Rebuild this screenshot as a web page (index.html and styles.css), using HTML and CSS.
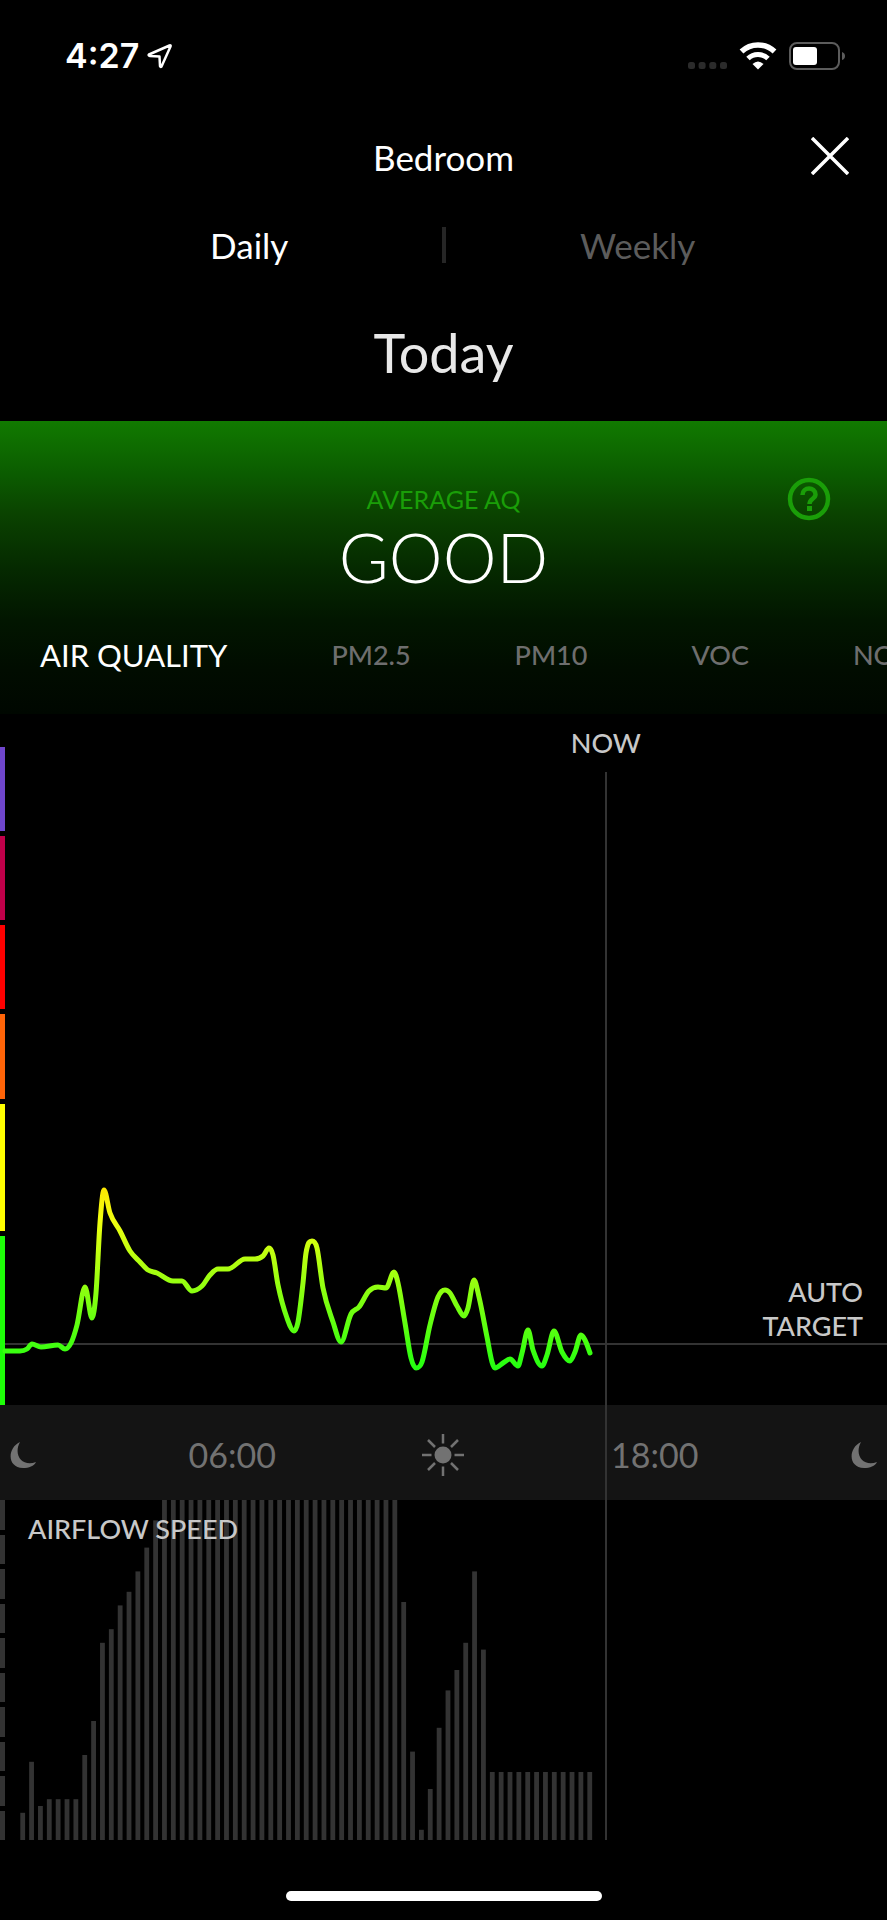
FILE: index.html
```
<!DOCTYPE html>
<html lang="en">
<head>
  <meta charset="UTF-8" />
  <meta name="viewport" content="width=device-width, initial-scale=1.0">
  <title>Bedroom - Air Quality</title>
  <link rel="stylesheet" href="styles.css">
</head>
<body>
  <div class="status-bar">
    <span class="clock">4:27</span>
    <svg class="location" width="26" height="26" viewBox="0 0 26 26">
      <path d="M2 11.5 L22.500 2.500 Q24 2 23.500 3.500 L14.500 23.500 Q13.500 24.500 13 23 L12.500 13.500 L3 13 Q1 12.500 2 11.500 Z" fill="none" stroke="#fff" stroke-width="2.500" stroke-linejoin="round" />
    </svg>
    <div class="status-icons">
      <svg width="39" height="8" viewBox="0 0 39 8" fill="#2b2b2b">
        <rect x="0" y="0" width="7" height="7" rx="2.500" />
        <rect x="10.600" y="0" width="7" height="7" rx="2.500" />
        <rect x="21.300" y="0" width="7" height="7" rx="2.500" />
        <rect x="32" y="0" width="7" height="7" rx="2.500" />
      </svg>
      <svg width="38" height="28" viewBox="0 0 38 28" fill="none" stroke="#fff">
        <path d="M2.500 9.500 A24 24 0 0 1 35.500 9.500" stroke-width="5.500" />
        <path d="M9 16.500 A14.500 14.500 0 0 1 29 16.500" stroke-width="5" />
        <path d="M13.500 22 Q19 17 24.500 22 L19 27.500 Z" fill="#fff" stroke="none" />
      </svg>
      <svg width="56" height="28" viewBox="0 0 56 28">
        <rect x="1" y="1" width="49" height="26" rx="7" fill="none" stroke="#5c5c5c" stroke-width="2" />
        <rect x="4" y="5" width="24" height="18" rx="3" fill="#fff" />
        <path d="M53 10 Q56 11 56 14 Q56 17 53 18 Z" fill="#5c5c5c" />
      </svg>
    </div>
  </div>

  <header class="header">
    <h1>Bedroom</h1>
    <button class="close-button" aria-label="Close">
      <svg width="38" height="38" viewBox="0 0 38 38" stroke="#fff" stroke-width="3.500">
        <path d="M1 1 L37 37 M37 1 L1 37" />
      </svg>
    </button>
  </header>

  <nav class="period-tabs">
    <button class="period active">Daily</button>
    <span class="divider"></span>
    <button class="period">Weekly</button>
  </nav>

  <h2>Today</h2>

  <section class="summary">
    <div class="average">
      <div class="average-label">AVERAGE AQ</div>
      <div class="average-value">GOOD</div>
      <button class="help-button" aria-label="Help">
        <svg width="44" height="44" viewBox="0 0 44 44" fill="none" stroke="#1a9e08" stroke-width="4.500">
          <circle cx="22" cy="22" r="19" />
          <path d="M15.500 18 C15.500 9.500 28.500 9.500 28.500 17.500 C28.500 22 22.500 21.500 22.500 27" />
          <path d="M20 31.500 H25" stroke-width="5" />
        </svg>
      </button>
    </div>
    <nav class="metrics">
      <button class="metric active">AIR QUALITY</button>
      <button class="metric">PM2.5</button>
      <button class="metric">PM10</button>
      <button class="metric">VOC</button>
      <button class="metric">NO2</button>
    </nav>
  </section>

  <main class="history">
    <div class="now">
      <span class="now-label">NOW</span>
      <span class="now-line"></span>
    </div>

    <div class="aq-chart">
      <div class="aq-scale">
        <span class="level severe"></span>
        <span class="level very-poor"></span>
        <span class="level poor"></span>
        <span class="level moderate"></span>
        <span class="level fair"></span>
        <span class="level good"></span>
      </div>
      <svg class="plot" viewBox="0 0 887 691" preserveAspectRatio="none">
        <defs>
          <linearGradient id="aq-gradient" gradientUnits="userSpaceOnUse" x1="0" y1="470" x2="0" y2="655">
            <stop offset="0" stop-color="#ffe600" />
            <stop offset="0.200" stop-color="#f0ff10" />
            <stop offset="0.400" stop-color="#b8ff10" />
            <stop offset="1" stop-color="#22ff10" />
          </linearGradient>
        </defs>
        <path class="target-line" d="M5 630 H887" />
        <path id="aq-line" class="aq-line" stroke="url(#aq-gradient)" />
      </svg>
      <div class="target-label">AUTO<br>TARGET</div>
    </div>

    <div class="time-axis">
      <svg class="moon" width="28" height="28" viewBox="0 0 28 28">
        <path d="M11 1 C-2 7 -2 27 14 27 C20 27 25 25 27 21 C13 26 4 14 11 1 Z" fill="#727272" />
      </svg>
      <span>06:00</span>
      <svg width="44" height="44" viewBox="0 0 44 44" stroke="#727272" stroke-width="2.500">
        <circle cx="22" cy="22" r="8.500" fill="#727272" stroke="none" />
        <path d="M22 1 V10.500 M22 33.500 V43 M1 22 H10.500 M33.500 22 H43 M7 7 L14 14 M30 30 L37 37 M37 7 L30 14 M14 30 L7 37" />
      </svg>
      <span>18:00</span>
      <svg class="moon last" width="28" height="28" viewBox="0 0 28 28">
        <path d="M11 1 C-2 7 -2 27 14 27 C20 27 25 25 27 21 C13 26 4 14 11 1 Z" fill="#727272" />
      </svg>
    </div>

    <div class="airflow-chart">
      <div class="airflow-scale">
        <span></span><span></span><span></span><span></span><span></span>
        <span></span><span></span><span></span><span></span><span></span>
      </div>
      <svg class="plot" viewBox="0 0 887 340" preserveAspectRatio="none">
        <g id="airflow-bars" fill="#333"></g>
      </svg>
      <div class="airflow-label">AIRFLOW SPEED</div>
    </div>
  </main>

  <div class="home-indicator"></div>

  <script src="script.js"></script>
</body>
</html>
```
FILE: styles.css
```
:root {
  --text: #ffffff;
  --text-soft: #c8c8c8;
  --text-muted: #6e6e6e;
  --line: #333333;
  --green: #1a9e08;
}

* {
  margin: 0;
  padding: 0;
  box-sizing: border-box;
}

body {
  font-family: 'Lato', sans-serif;
  background: #000;
  color: var(--text);
  min-height: 100vh;
  overflow-x: hidden;
}

button {
  font-family: inherit;
  color: inherit;
  background: none;
  border: none;
  cursor: pointer;
}

svg {
  display: block;
}

/* Status bar */
.status-bar {
  display: flex;
  align-items: center;
  gap: 8px;
  padding: 36px 42px 0 65px;
}

.clock {
  font-family: 'Inter', sans-serif;
  font-size: 34px;
  font-weight: 600;
  line-height: 40px;
}

.status-icons {
  display: flex;
  align-items: flex-end;
  gap: 12px;
  margin-left: auto;
}

/* Header */
.header {
  position: relative;
  padding-top: 57px;
  text-align: center;
}

h1 {
  font-size: 35px;
  font-weight: 400;
  line-height: 48px;
}

.close-button {
  position: absolute;
  right: 38px;
  bottom: 6px;
}

.period-tabs {
  display: flex;
  align-items: center;
  padding: 40px 57px 0;
}

.period {
  flex: 1;
  font-size: 35px;
  line-height: 48px;
  color: #5c5c5c;
}

.period.active {
  color: var(--text);
}

.divider {
  width: 4px;
  height: 36px;
  background: #262626;
}

h2 {
  padding: 48px 0 32px;
  font-size: 54px;
  font-weight: 400;
  line-height: 72px;
  text-align: center;
  color: #e8e8e8;
}

/* Average air quality */
.summary {
  height: 293px;
  padding-top: 60px;
  background: linear-gradient(#117a00 0%, #0b5c00 18%, #0a4200 32%, #052a00 50%, #021600 68%, #010c00 85%, #000700 100%);
}

.average {
  position: relative;
  text-align: center;
}

.average-label {
  font-size: 25px;
  line-height: 36px;
  color: var(--green);
}

.average-value {
  font-size: 68px;
  font-weight: 300;
  line-height: 80px;
}

.help-button {
  position: absolute;
  top: -4px;
  right: 56px;
}

.metrics {
  display: flex;
  align-items: center;
  gap: 104px;
  margin-top: 34px;
  padding-left: 40px;
  overflow: hidden;
}

.metric {
  flex: none;
  font-size: 27px;
  font-weight: 500;
  line-height: 48px;
  color: var(--text-muted);
}

.metric.active {
  font-size: 31px;
  font-weight: 400;
  color: var(--text);
}

/* History charts */
.history {
  position: relative;
}

.now {
  position: absolute;
  z-index: 1;
  top: 12px;
  bottom: 0;
  left: 68.3%;
  width: 100px;
  margin-left: -50px;
  display: flex;
  flex-direction: column;
  align-items: center;
  gap: 12px;
}

.now-label {
  font-size: 27px;
  font-weight: 500;
  line-height: 34px;
  color: var(--text-soft);
}

.now-line {
  flex: 1;
  width: 2px;
  background: var(--line);
}

.aq-chart {
  position: relative;
  height: 691px;
}

.aq-scale {
  display: flex;
  flex-direction: column;
  gap: 5px;
  width: 5px;
  height: 100%;
  padding-top: 33px;
}

.level {
  flex: 84;
}

.severe {
  background: #6f46cc;
}

.very-poor {
  background: #c0004a;
}

.poor {
  background: #ff0000;
}

.moderate {
  background: #ff6408;
}

.fair {
  flex: 127;
  background: #ffff00;
}

.good {
  flex: 169;
  background: #1eff08;
}

.plot {
  position: absolute;
  inset: 0;
  width: 100%;
  height: 100%;
}

.target-line {
  stroke: var(--line);
  stroke-width: 2;
}

.aq-line {
  fill: none;
  stroke-width: 5;
  stroke-linecap: round;
  stroke-linejoin: round;
}

.target-label {
  position: absolute;
  right: 24px;
  bottom: 62px;
  font-size: 27px;
  font-weight: 500;
  line-height: 34px;
  text-align: right;
  color: var(--text-soft);
}

.time-axis {
  display: grid;
  grid-template-columns: 3fr 5fr 5fr 5fr 3fr;
  align-items: center;
  justify-items: center;
  height: 95px;
  padding-top: 4px;
  background: #141414;
  font-size: 34px;
  font-weight: 400;
  color: #727272;
}

.moon {
  justify-self: start;
  margin-left: 9px;
}

.moon.last {
  justify-self: end;
  margin-right: 9px;
}

.airflow-chart {
  position: relative;
  height: 340px;
}

.airflow-scale {
  display: flex;
  flex-direction: column;
  gap: 5px;
  width: 5px;
  height: 100%;
}

.airflow-scale span {
  flex: 1;
  background: var(--line);
}

.airflow-label {
  position: absolute;
  top: 12px;
  left: 28px;
  font-size: 27px;
  font-weight: 500;
  line-height: 34px;
  color: var(--text-soft);
}

.home-indicator {
  width: 316px;
  height: 10px;
  margin: 51px auto 18px;
  border-radius: 5px;
  background: #fff;
}
```
FILE: script.js
```
// Air quality readings as [x, y] in chart units
const readings = [
  [5, 637], [20, 637], [27, 635], [32, 630], [41, 633], [58, 631], [65, 635],
  [71, 629], [77, 611], [85, 573], [92, 604], [96, 579], [100, 509], [104, 476],
  [110, 499], [120, 517], [130, 537], [140, 548], [148, 556], [157, 559],
  [173, 567], [182, 567], [192, 577], [202, 572], [210, 561], [218, 555],
  [228, 555], [245, 545], [255, 545], [263, 542], [269, 534], [273, 541],
  [278, 571], [287, 604], [294, 617], [298, 608], [303, 569], [306, 539],
  [312, 527], [317, 534], [323, 574], [333, 608], [341, 628], [351, 600],
  [359, 593], [369, 577], [378, 573], [386, 574], [394, 558], [398, 569],
  [405, 609], [411, 644], [416, 654], [422, 648], [430, 611], [438, 583],
  [445, 576], [450, 579], [457, 592], [464, 602], [468, 594], [474, 566],
  [479, 583], [487, 623], [492, 648], [495, 654], [503, 649], [510, 645],
  [518, 652], [522, 639], [528, 616], [533, 636], [542, 652], [547, 641],
  [554, 617], [562, 638], [570, 647], [575, 638], [581, 621], [585, 626],
  [590, 639]
];

// Fan speed in percent, one value per bar
const airflow = [
  8, 23, 10, 12, 12, 12, 12, 25, 35, 58, 62, 69, 73, 79, 86, 94,
  ...Array(27).fill(100),
  70, 26, 3, 15, 33, 44, 50, 58, 79, 56,
  ...Array(12).fill(20)
];

// Slope at each point, flat on peaks and dips so the curve never overshoots
function slopeAt(points, i) {
  if (i === 0 || i === points.length - 1) return null;
  const [x0, y0] = points[i - 1];
  const [x1, y1] = points[i];
  const [x2, y2] = points[i + 1];
  const a = (y1 - y0) / (x1 - x0);
  const b = (y2 - y1) / (x2 - x1);
  if (a * b <= 0) return 0;
  const limit = 3 * Math.min(Math.abs(a), Math.abs(b));
  return Math.sign(a) * Math.min(limit, Math.abs(a + b) / 2);
}

function smoothPath(points) {
  let d = `M${points[0][0]} ${points[0][1]}`;
  for (let i = 1; i < points.length; i++) {
    const [x0, y0] = points[i - 1];
    const [x1, y1] = points[i];
    const straight = (y1 - y0) / (x1 - x0);
    const step = (x1 - x0) / 3;
    const m0 = slopeAt(points, i - 1) ?? straight;
    const m1 = slopeAt(points, i) ?? straight;
    d += ` C${x0 + step} ${y0 + m0 * step} ${x1 - step} ${y1 - m1 * step} ${x1} ${y1}`;
  }
  return d;
}

document.getElementById('aq-line').setAttribute('d', smoothPath(readings));

document.getElementById('airflow-bars').innerHTML = airflow
  .map((speed, i) => {
    const height = speed * 3.4;
    return `<rect x="${20.3 + i * 8.86}" y="${340 - height}" width="4.8" height="${height}" />`;
  })
  .join('');
```
